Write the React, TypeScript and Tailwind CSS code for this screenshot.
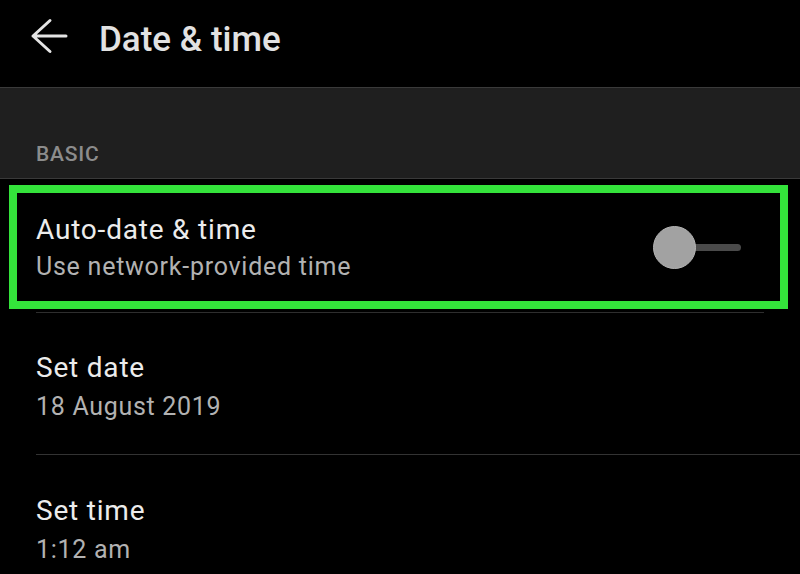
import { useState } from 'react'

const BackArrow = () => (
  <svg width="38" height="36" viewBox="0 0 38 36" fill="none" stroke="#e4e4e4" strokeWidth="3" strokeLinecap="round" strokeLinejoin="round">
    <path d="M3 18H36M20 2.5L3 18L20 33.5" />
  </svg>
)

function Toggle({ on, onChange }: { on: boolean; onChange: (v: boolean) => void }) {
  return (
    <button onClick={() => onChange(!on)} className="relative w-[88px] h-[44px] flex items-center">
      <span className="absolute left-[34px] w-[54px] h-[7px] rounded-full bg-[#4a4a4a]" />
      <span className="absolute left-0 w-[43px] h-[43px] rounded-full bg-[#a2a2a2] border border-[#b4b4b4]" />
    </button>
  )
}

export default function App() {
  const [auto, setAuto] = useState(false)

  return (
    <div className="w-[800px] h-[574px] overflow-hidden bg-black text-[#e8e8e8]" style={{ fontFamily: 'Roboto, "Noto Sans", sans-serif' }}>
      {/* Toolbar */}
      <div className="h-[87px] flex items-start pt-[18px]">
        <div className="ml-[30px]"><BackArrow /></div>
        <h1 className="ml-[31px] mt-[2px] text-[35px] leading-[40px] font-medium text-[#e2e2e2]">Date &amp; time</h1>
      </div>

      {/* Section header */}
      <div className="h-[92px] bg-[#1f1f1f] border-y border-[#3a3a3a] pt-[54px] pl-[36px]">
        <div className="text-[21px] leading-[24px] font-medium tracking-[0.8px] text-[#8c8c8c]">BASIC</div>
      </div>

      {/* Auto-date row, highlighted */}
      <div className="ml-[9px] mt-[6px] w-[779px] h-[124px] border-[8px] border-[#34e33b] flex items-center justify-between pl-[19px] pr-[39px]">
        <div>
          <div className="text-[28px] leading-[36px] tracking-[0.8px] text-[#ececec]">Auto-date &amp; time</div>
          <div className="mt-[3px] text-[25px] leading-[32px] tracking-[0.75px] text-[#b2b2b2]">Use network-provided time</div>
        </div>
        <Toggle on={auto} onChange={setAuto} />
      </div>
      <div className="ml-[36px] mt-[3px] w-[728px] h-px bg-[#2e2e2e]" />

      {/* Set date */}
      <div className="pl-[36px] pt-[37px] pb-[31px]">
        <div className="text-[28px] leading-[36px] tracking-[0.8px] text-[#ececec]">Set date</div>
        <div className="mt-[5px] text-[25px] leading-[32px] tracking-[0.7px] text-[#b2b2b2]">18 August 2019</div>
      </div>
      <div className="ml-[36px] h-px bg-[#333333]" />

      {/* Set time */}
      <div className="pl-[36px] pt-[38px]">
        <div className="text-[28px] leading-[36px] tracking-[0.8px] text-[#ececec]">Set time</div>
        <div className="mt-[5px] text-[25px] leading-[32px] tracking-[0.7px] text-[#b2b2b2]">1:12 am</div>
      </div>
    </div>
  )
}
